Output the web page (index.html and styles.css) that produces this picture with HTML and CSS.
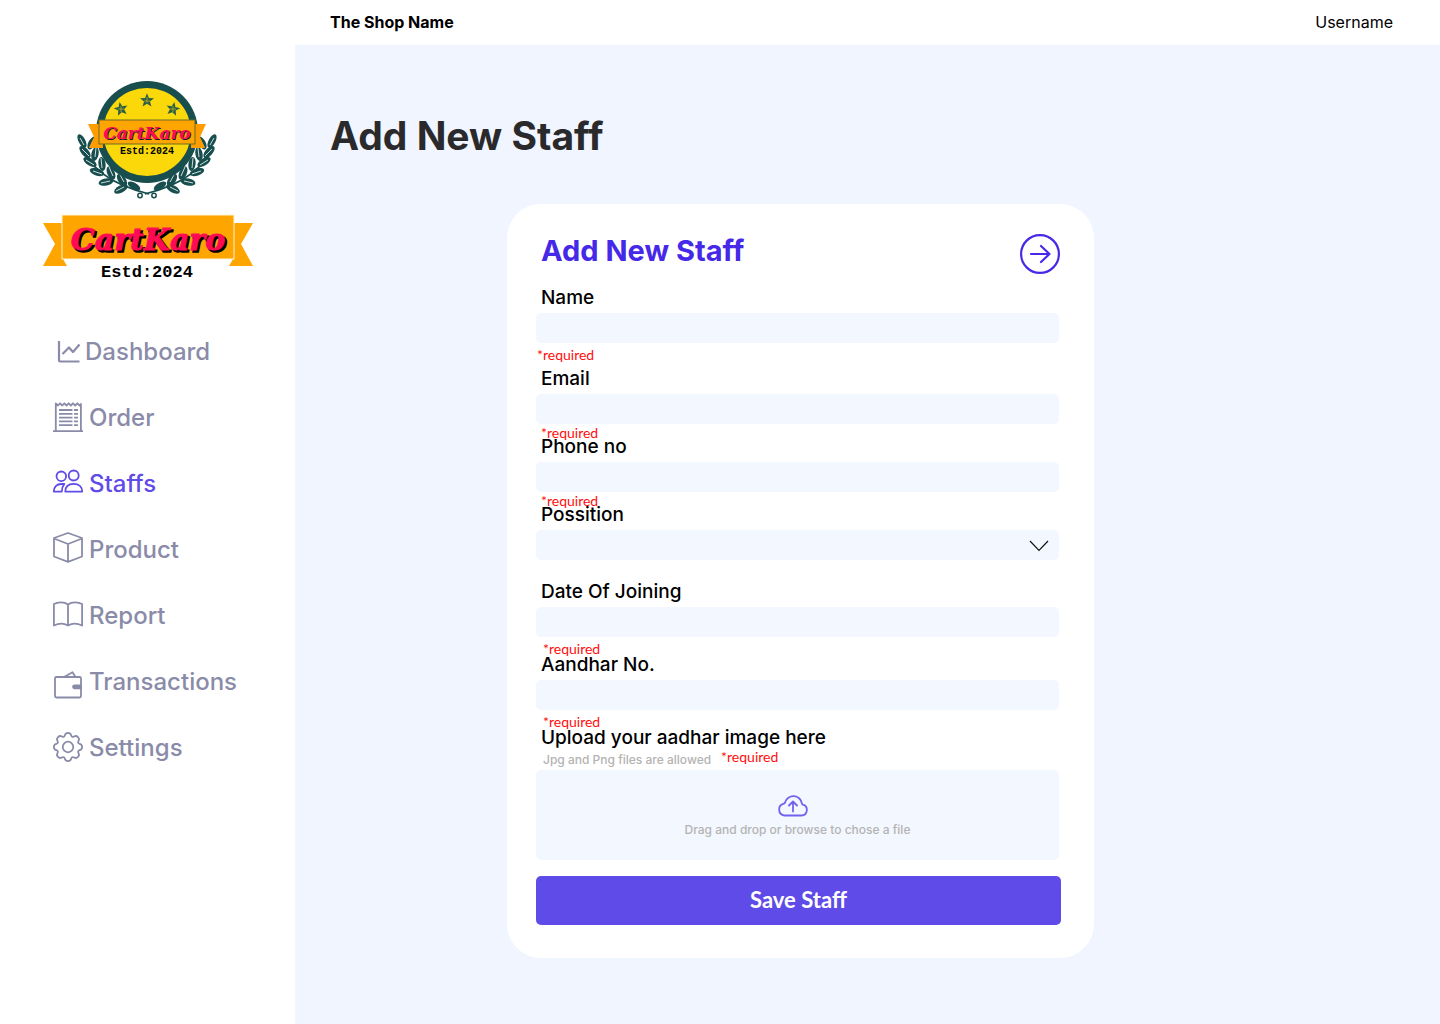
FILE: index.html
```html
<!DOCTYPE html>
<html lang="en">
<head>
<meta charset="utf-8">
<meta name="viewport" content="width=device-width, initial-scale=1">
<title>Add New Staff</title>
<link rel="stylesheet" href="styles.css">
</head>
<body>
<div class="app">
  <aside class="sidebar">
    <svg class="badge" viewBox="0 0 140 118" role="img" aria-label="CartKaro badge">
      <defs>
        <g id="branch">
          <path d="M5 62Q13 98 72 113" fill="none" stroke="#184e4e" stroke-width="1.6"/>
          <g fill="#184e4e">
            <ellipse cx="5" cy="60" rx="7.500" ry="3.400" transform="rotate(62 5 60)"/>
            <ellipse cx="8" cy="71" rx="7.500" ry="3.600" transform="rotate(48 8 71)"/>
            <ellipse cx="13" cy="81" rx="7.500" ry="3.600" transform="rotate(32 13 81)"/>
            <ellipse cx="20" cy="91" rx="7.500" ry="3.600" transform="rotate(18 20 91)"/>
            <ellipse cx="29" cy="101" rx="7.500" ry="3.600" transform="rotate(-12 29 101)"/>
            <ellipse cx="44" cy="108" rx="7.500" ry="3.600" transform="rotate(-28 44 108)"/>
            <ellipse cx="15" cy="62" rx="7" ry="3.600" transform="rotate(118 15 62)"/>
            <ellipse cx="18" cy="73" rx="7" ry="3.600" transform="rotate(100 18 73)"/>
            <ellipse cx="25" cy="83" rx="7" ry="3.600" transform="rotate(82 25 83)"/>
            <ellipse cx="34" cy="92" rx="7" ry="3.800" transform="rotate(66 34 92)"/>
            <ellipse cx="45" cy="99" rx="7" ry="3.800" transform="rotate(54 45 99)"/>
            <ellipse cx="57" cy="105" rx="7" ry="3.200" transform="rotate(30 57 105)"/>
          </g>
          <g stroke="#fff" stroke-width=".8" fill="none">
            <path d="M3 57l4 7M5 68l7 7M9 79l8 5M16 90l9 3M24 102l9-2M39 110l8-4M17 58l-4 8M19 67l-1 9M24 77l1 10M32 86l4 9M42 92l5 9"/>
          </g>
          <circle cx="63" cy="114.500" r="2.200" fill="#fff" stroke="#184e4e" stroke-width="1.500"/>
        </g>
        <path id="star" d="M0-7.200L1.900-2.400 7-2.200 3 1 4.400 6 0 3.200-4.400 6-3 1-7-2.200-1.900-2.400z" fill="#2c5f45"/>
      </defs>
      <use href="#branch"/>
      <use href="#branch" transform="translate(140 0) scale(-1 1)"/>
      <circle cx="70" cy="51" r="51" fill="#184e4e"/>
      <circle cx="70" cy="51" r="44" fill="#fbd80a"/>
      <use href="#star" transform="translate(70 19.500)"/>
      <use href="#star" transform="translate(44 28) rotate(-12)"/>
      <use href="#star" transform="translate(96 28) rotate(12)"/>
      <g stroke="#fbd80a" stroke-width=".5"><path d="M70 16v6M67 20h6M44 25v6M41 28h6M96 25v6M93 28h6"/></g>
      <path d="M11 43h15v24H12l5-11zM129 43h-15v24h14l-5-11z" fill="#ff9c00"/>
      <rect x="22" y="39" width="96" height="24" fill="#ffa500" stroke="#6b6a28" stroke-width="1"/>
      <g class="brand brand--small" text-anchor="middle">
        <text x="71" y="59" fill="#16202a">CartKaro</text>
        <text x="70" y="58" fill="#ff0a54">CartKaro</text>
      </g>
      <text class="estd estd--small" x="70" y="73" text-anchor="middle">Estd:2024</text>
    </svg>
    <svg class="ribbon" viewBox="0 0 210 66" role="img" aria-label="CartKaro, established 2024">
      <path d="M0 8h20v36l4 7H0l12-22zM210 8h-20v36l-4 7h24l-12-22z" fill="#ffa500"/>
      <rect x="19" y="0" width="172" height="44" fill="#ffa500" stroke="#fff3d6" stroke-width="1"/>
      <g class="brand brand--large" text-anchor="middle">
        <text x="107" y="37" fill="#000" stroke="#000" stroke-width="1.500">CartKaro</text>
        <text x="105" y="35" fill="#ff0a54" stroke="#ff0a54" stroke-width=".8">CartKaro</text>
      </g>
      <text class="estd estd--large" x="104" y="62" text-anchor="middle">Estd:2024</text>
    </svg>

    <nav class="nav" aria-label="Main">
      <a class="nav__link nav__link--tight" href="#">
        <svg class="icon" viewBox="0 0 30 30" stroke-width="2.200"><path d="M6 5v19.500q0 1 1 1h19.500M9.500 18l6.500-6.500 4 4.500 6.500-7.500"/></svg>
        Dashboard</a>
      <a class="nav__link" href="#">
        <svg class="icon" viewBox="0 0 30 30" stroke-width="1.800"><path d="M0 29.200h30M2.800 29V1.500l2.200 2 2-2.200 2.300 2.200 2-2.200 2.200 2.200 2.200-2.200 2.200 2.200 2-2.200 2.300 2.200 2.200-2.200 2.200 2.200 1.300-1.500V29M6 8h13.500M21 8h4M6 11.800h13.500M21 11.800h4M6 15.600h13.500M21 15.600h4M6 19.400h13.500M21 19.400h4M6 23.200h13.500M21 23.200h4"/></svg>
        Order</a>
      <a class="nav__link nav__link--active" href="#" aria-current="page">
        <svg class="icon" viewBox="0 0 30 30" stroke-width="1.800"><circle cx="20.700" cy="7.500" r="5"/><circle cx="8.300" cy="8.300" r="4.800"/><path d="M12.300 23.600c0-5 3.300-7.800 8.400-7.800s8.500 2.800 8.500 7.800zM11.300 16H8.500C3.500 16 .8 19 .8 23.600h8c0-3.200.7-5.400 2.500-7.600z"/></svg>
        Staffs</a>
      <a class="nav__link" href="#">
        <svg class="icon" viewBox="0 0 30 30" stroke-width="1.800"><path d="M15-1l14 5v18.500l-14 5.300-14-5.300V4zM1 4.500l14 5.500 14-5.500M15 10v17.500"/></svg>
        Product</a>
      <a class="nav__link" href="#">
        <svg class="icon" viewBox="0 0 30 30" stroke-width="1.800"><path d="M15 4.500v21M15 4.500C11 1.500 5 1.800.9 4v21.500c4.500-2.200 10-2.400 14.100 0 4.100-2.400 9.600-2.200 14.100 0V4C25 1.800 19 1.500 15 4.500z"/></svg>
        Report</a>
      <a class="nav__link" href="#">
        <svg class="icon" viewBox="0 0 30 30" stroke-width="1.800"><rect x="2" y="11" width="26" height="20.500" rx="1.500"/><path d="M11.500 10.800l8-4.500 2.800 4.500"/><path d="M28 19.300h-6.500a1.500 1.500 0 0 0 0 3H28z" fill="currentColor"/></svg>
        Transactions</a>
      <a class="nav__link" href="#">
        <svg class="icon" viewBox="-.5 -.5 17 17" stroke-width="1"><circle cx="8" cy="8" r="3"/><path d="M9.796 1.343c-.527-1.790-3.065-1.790-3.592 0l-.094.319a.873.873 0 0 1-1.255.520l-.292-.160c-1.640-.892-3.433.902-2.540 2.541l.159.292a.873.873 0 0 1-.520 1.255l-.319.094c-1.790.527-1.790 3.065 0 3.592l.319.094a.873.873 0 0 1 .520 1.255l-.160.292c-.892 1.640.901 3.434 2.541 2.540l.292-.159a.873.873 0 0 1 1.255.520l.094.319c.527 1.790 3.065 1.790 3.592 0l.094-.319a.873.873 0 0 1 1.255-.520l.292.160c1.640.893 3.434-.902 2.540-2.541l-.159-.292a.873.873 0 0 1 .520-1.255l.319-.094c1.790-.527 1.790-3.065 0-3.592l-.319-.094a.873.873 0 0 1-.520-1.255l.160-.292c.893-1.640-.902-3.433-2.541-2.540l-.292.159a.873.873 0 0 1-1.255-.520z"/></svg>
        Settings</a>
    </nav>
  </aside>

  <div class="content">
    <header class="topbar">
      <strong>The Shop Name</strong>
      <span>Username</span>
    </header>
    <main class="main">
      <h1 class="page-title">Add New Staff</h1>
      <form class="card">
        <div class="card__head">
          <h2 class="card__title">Add New Staff</h2>
          <button class="next" type="button" aria-label="Next">
            <svg class="next__icon" viewBox="0 0 40 40"><circle cx="20" cy="20" r="18.900"/><path d="M11 20h18.500M21 12l8.500 8-8.500 8"/></svg>
          </button>
        </div>
        <div class="fields">
          <div class="field field--first">
            <label class="label" for="name">Name</label>
            <input class="input" id="name" type="text" required>
            <p class="hint hint--spaced">*required</p>
          </div>
          <div class="field">
            <label class="label" for="email">Email</label>
            <input class="input" id="email" type="email" required>
            <p class="hint">*required</p>
          </div>
          <div class="field">
            <label class="label" for="phone">Phone no</label>
            <input class="input" id="phone" type="tel" required>
            <p class="hint">*required</p>
          </div>
          <div class="field field--last">
            <label class="label" for="position">Possition</label>
            <div class="select">
              <select class="input" id="position"><option></option></select>
              <svg class="select__arrow" viewBox="0 0 20 12"><path d="M1 1l9 9.500L19 1"/></svg>
            </div>
          </div>
          <div class="field">
            <label class="label" for="joined">Date Of Joining</label>
            <input class="input" id="joined" type="text" required>
            <p class="hint hint--spaced">*required</p>
          </div>
          <div class="field">
            <label class="label" for="aadhar">Aandhar No.</label>
            <input class="input" id="aadhar" type="text" required>
            <p class="hint hint--spaced">*required</p>
          </div>
          <div class="field">
            <label class="label label--upload" for="file">Upload your aadhar image here</label>
            <div class="note"><span>Jpg and Png files are allowed</span><span class="note__required">*required</span></div>
            <label class="drop">
              <input class="drop__file" id="file" type="file" accept=".jpg,.png">
              <svg class="drop__icon" viewBox="0 0 30 22"><path d="M6.500 20.500h17a5.500 5.500 0 0 0 1.300-10.800q-.8-.3-.8-1A8.700 8.700 0 0 0 7 7.500q-.2 1-1.200 1.200A6 6 0 0 0 6.500 20.500zM15 16.500V7M11 10.500L15 6.500l4 4"/></svg>
              <span>Drag and drop or browse to chose a file</span>
            </label>
          </div>
        </div>
        <button class="save" type="submit">Save Staff</button>
      </form>
    </main>
  </div>
</div>
</body>
</html>
```
FILE: styles.css
```css
*, *::before, *::after { box-sizing: border-box; }

body {
  margin: 0;
  background: #fff;
  color: #000;
  font-family: Inter, sans-serif;
}

h1, h2, p { margin: 0; }

.app {
  display: grid;
  grid-template-columns: 295px 1fr;
  min-height: 100vh;
}

/* Sidebar */
.sidebar {
  display: flex;
  flex-direction: column;
  align-items: center;
  padding-top: 81px;
}

.badge { width: 140px; height: 118px; margin-right: 1px; overflow: visible; }
.ribbon { width: 210px; height: 66px; margin-top: 16px; overflow: visible; }

.brand { font-family: "DejaVu Serif", serif; font-weight: 700; font-style: italic; }
.brand--small { font-size: 17px; }
.brand--large { font-size: 30px; }

.estd { font-family: "Liberation Mono", monospace; font-weight: 700; }
.estd--small { font-size: 10px; }
.estd--large { font-size: 17px; }

.nav {
  display: flex;
  flex-direction: column;
  gap: 34px;
  align-self: stretch;
  margin-top: 55px;
  padding-left: 53px;
}

.nav__link {
  display: flex;
  align-items: center;
  gap: 6px;
  color: #8a8ba8;
  font-size: 24px;
  font-weight: 500;
  line-height: 30px;
  text-decoration: none;
}

.nav__link--tight { gap: 2px; }
.nav__link--active { color: #5f4be8; }

.icon {
  flex: none;
  width: 30px;
  height: 30px;
  margin-bottom: 2px;
  overflow: visible;
  fill: none;
  stroke: currentColor;
  stroke-linejoin: round;
}

/* Content */
.content {
  display: flex;
  flex-direction: column;
  background: #f0f5ff;
}

.topbar {
  display: flex;
  justify-content: space-between;
  padding: 12px 47px 13px 35px;
  background: #fff;
  font-size: 16px;
  line-height: 20px;
}

.topbar strong { font-weight: 700; }

.main { padding: 67px 35px 66px; }

.page-title {
  color: #2a2a2c;
  font-size: 39px;
  font-weight: 700;
  line-height: 48px;
}

/* Form card */
.card {
  max-width: 587px;
  margin: 44px 0 0 177px;
  padding: 29px 33px 33px 29px;
  border-radius: 34px;
  background: #fff;
}

.card__head {
  display: flex;
  justify-content: space-between;
  padding: 0 1px 0 5px;
}

.card__title {
  color: #4629e8;
  font-size: 29px;
  font-weight: 700;
  line-height: 36px;
}

.next {
  width: 40px;
  height: 40px;
  margin-top: 1px;
  padding: 0;
  border: 0;
  background: none;
  color: #4629e8;
}

.next__icon {
  display: block;
  fill: none;
  stroke: currentColor;
  stroke-width: 2.2;
  stroke-linecap: round;
  stroke-linejoin: round;
}

.fields { padding: 16px 2px 0 0; }
.field--first { margin-bottom: 8px; }
.field--last { margin-bottom: 23px; }

.label {
  display: block;
  margin-bottom: 7px;
  padding-left: 5px;
  font-size: 19px;
  font-weight: 500;
  line-height: 16px;
}

.label--upload { margin-bottom: 3px; }

.input {
  display: block;
  width: 100%;
  height: 30px;
  padding: 0 10px;
  border: 0;
  border-radius: 5px;
  background: #f3f7ff;
  font: inherit;
  font-size: 16px;
  appearance: none;
}

.select { position: relative; }

.select__arrow {
  position: absolute;
  top: 10px;
  right: 10px;
  width: 20px;
  height: 12px;
  fill: none;
  stroke: #111;
  stroke-width: 1.2;
  pointer-events: none;
}

.hint {
  margin-bottom: -3px;
  padding-left: 5px;
  color: #ff0d0d;
  font-family: Lato, sans-serif;
  font-size: 14px;
  line-height: 18px;
}

.hint--spaced { margin: 3px 0 -1px; padding-left: 7px; }
.field--first .hint { padding-left: 1px; }
.field--last { margin-bottom: 24px; }

.note {
  display: flex;
  gap: 10px;
  padding-left: 7px;
  color: #b3b3b3;
  font-size: 12px;
  font-weight: 500;
  line-height: 21px;
}

.note__required {
  color: #ff0d0d;
  font-family: Lato, sans-serif;
  font-size: 14px;
  font-weight: 400;
  line-height: 16px;
}

.drop {
  display: flex;
  flex-direction: column;
  align-items: center;
  gap: 5px;
  height: 90px;
  padding-top: 25px;
  border-radius: 5px;
  background: #f3f7ff;
  color: #b3b3b3;
  font-size: 12px;
  font-weight: 500;
  line-height: 16px;
}

.drop__file {
  position: absolute;
  width: 1px;
  height: 1px;
  opacity: 0;
}

.drop__icon {
  width: 30px;
  height: 22px;
  margin-right: 10px;
  fill: none;
  stroke: #7460ee;
  stroke-width: 1.8;
  stroke-linecap: round;
  stroke-linejoin: round;
}

.save {
  display: block;
  width: 100%;
  height: 49px;
  margin-top: 16px;
  padding: 0 0 3px;
  border: 0;
  border-radius: 5px;
  background: #5f4be8;
  color: #fff;
  font-family: Lato, sans-serif;
  font-size: 22px;
  font-weight: 700;
}
```
